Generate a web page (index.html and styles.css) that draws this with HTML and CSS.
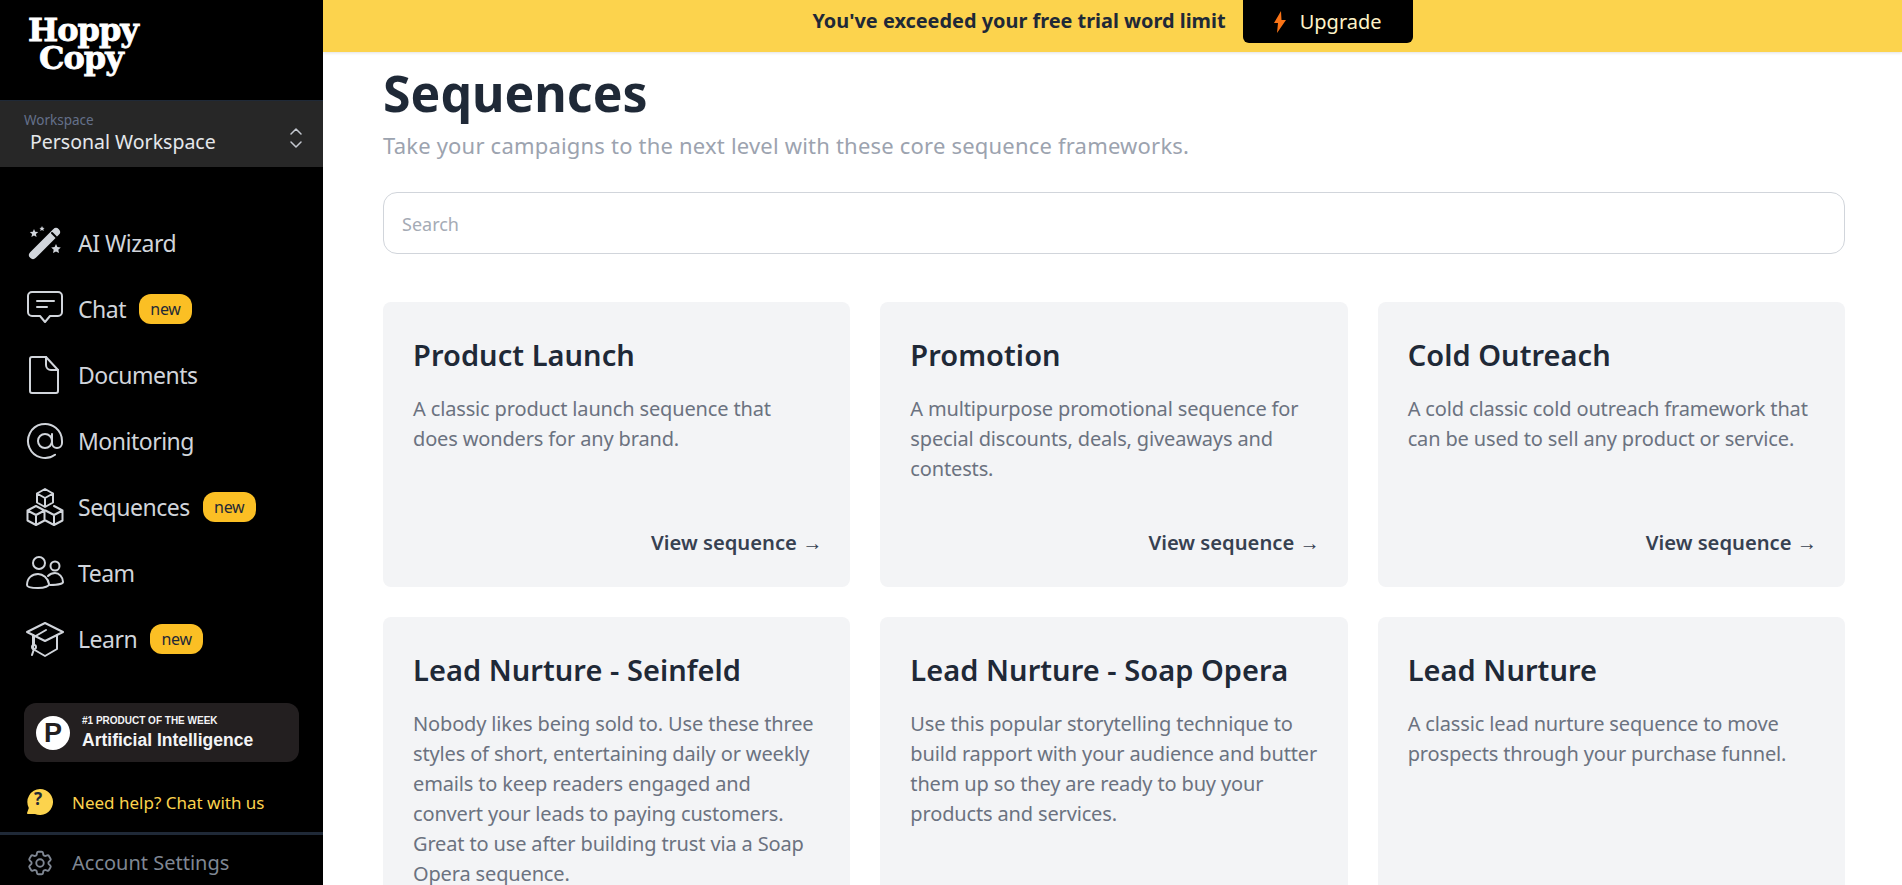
FILE: index.html
```html
<!DOCTYPE html>
<html lang="en">
<head>
  <meta charset="UTF-8" />
  <title>Hoppy Copy | Sequences</title>
  <link rel="stylesheet" href="styles.css">
</head>
<body>
  <aside class="sidebar">
    <div class="logo"><span>Hoppy</span><span>Copy</span></div>

    <div class="workspace">
      <div class="workspace-text">
        <div class="workspace-label">Workspace</div>
        <div class="workspace-name">Personal Workspace</div>
      </div>
      <svg class="chevrons" viewBox="0 0 12 20" width="12" height="20" fill="none" stroke="#c4c8d0" stroke-width="1.5" stroke-linecap="round" stroke-linejoin="round">
        <path d="M1 6l5-5 5 5"/><path d="M1 14l5 5 5-5"/>
      </svg>
    </div>

    <nav class="nav">
      <a class="nav-item">
        <svg class="nav-icon" viewBox="-1 -1 38 38" fill="#d1d5db">
          <path d="M6 30L29 7" fill="none" stroke="#d1d5db" stroke-width="8" stroke-linecap="round"/>
          <path d="M25 8l4 4" fill="none" stroke="#000" stroke-width="2" stroke-linecap="round"/>
          <path d="M7 4l1.200 2.800 3 .3-2.300 2 .7 3L7 10.500 4.400 12.100l.7-3-2.300-2 3-.3zM15 1l.8 1.700 1.800.2-1.300 1.200.4 1.800-1.700-.9-1.700.9.400-1.800-1.300-1.200 1.800-.2zM29 19l1.400 3.100 3.400.4-2.500 2.300.7 3.300-3-1.700-3 1.700.7-3.300-2.500-2.300 3.400-.4z"/>
        </svg>
        <span>AI Wizard</span>
      </a>
      <a class="nav-item">
        <svg class="nav-icon" viewBox="0 0 38 38" fill="none" stroke="#d1d5db" stroke-width="2" stroke-linecap="round" stroke-linejoin="round">
          <path d="M6 2h26a4 4 0 0 1 4 4v16a4 4 0 0 1-4 4h-8l-5 6-5-6H6a4 4 0 0 1-4-4V6a4 4 0 0 1 4-4z"/>
          <path d="M11 11h17M11 17h10"/>
        </svg>
        <span>Chat</span><span class="new-badge">new</span>
      </a>
      <a class="nav-item">
        <svg class="nav-icon" viewBox="0 0 38 38" fill="none" stroke="#d1d5db" stroke-width="2" stroke-linecap="round" stroke-linejoin="round">
          <path d="M6 1h14l12 13v21a2 2 0 0 1-2 2H6a2 2 0 0 1-2-2V3a2 2 0 0 1 2-2z"/>
          <path d="M20 1v8a5 5 0 0 0 5 5h7"/>
        </svg>
        <span>Documents</span>
      </a>
      <a class="nav-item">
        <svg class="nav-icon" viewBox="0 0 38 38" fill="none" stroke="#d1d5db" stroke-width="2" stroke-linecap="round" stroke-linejoin="round">
          <circle cx="19" cy="19" r="7"/>
          <path d="M26 12v9a5 5 0 0 0 10 0v-2a17 17 0 1 0-7 13.700"/>
        </svg>
        <span>Monitoring</span>
      </a>
      <a class="nav-item">
        <svg class="nav-icon" viewBox="0 0 38 38" fill="none" stroke="#d1d5db" stroke-width="2" stroke-linecap="round" stroke-linejoin="round">
          <path d="M19 1l8 4.500v9L19 19l-8-4.500v-9zM11 5.500l8 4.500 8-4.500M19 10v9"/>
          <path d="M10 18l8.500 4.500v10L10 37l-8.500-4.500v-10zM1.500 22.500L10 27l8.500-4.500M10 27v10"/>
          <path d="M28 18l8.500 4.500v10L28 37l-8.500-4.500M19.500 22.500L28 27l8.500-4.500M28 27v10"/>
        </svg>
        <span>Sequences</span><span class="new-badge">new</span>
      </a>
      <a class="nav-item">
        <svg class="nav-icon" viewBox="0 0 38 38" fill="none" stroke="#d1d5db" stroke-width="2" stroke-linecap="round" stroke-linejoin="round">
          <circle cx="13" cy="9" r="6"/>
          <circle cx="29" cy="12" r="4.500"/>
          <path d="M1 31c0-7 5-11 11-11 5 0 10 4 11 10 .3 2-4 4-11 4S1 33 1 31z"/>
          <path d="M22 22c2-2 4-3 7-3 4 0 8 4 8 9 0 1.500-4 3-13 3"/>
        </svg>
        <span>Team</span>
      </a>
      <a class="nav-item">
        <svg class="nav-icon" viewBox="0 0 38 38" fill="none" stroke="#d1d5db" stroke-width="2" stroke-linecap="round" stroke-linejoin="round">
          <path d="M19 3l18 9-18 9-18-9z"/>
          <path d="M7 15v14l12 7 12-7V15"/>
          <path d="M20 10L8 17v8"/>
          <circle cx="8" cy="27" r="2"/>
          <path d="M8 29l-2 6"/>
        </svg>
        <span>Learn</span><span class="new-badge">new</span>
      </a>
    </nav>

    <div class="ph-badge">
      <div class="ph-logo">P</div>
      <div class="ph-text">
        <div class="ph-small">#1 PRODUCT OF THE WEEK</div>
        <div class="ph-big">Artificial Intelligence</div>
      </div>
    </div>

    <a class="help">
      <svg class="help-icon" viewBox="0 0 26 26">
        <path d="M13 0a13 13 0 1 1-5 25H1a1 1 0 0 1-.8-1.500L1.800 19A13 13 0 0 1 13 0z" fill="#fcd34d"/>
      </svg>
      <span class="help-mark">?</span>
      <span>Need help? Chat with us</span>
    </a>

    <a class="settings">
      <svg class="settings-icon" viewBox="0 0 24 24" fill="none" stroke="#7f8793" stroke-width="1.500" stroke-linecap="round" stroke-linejoin="round">
        <path d="M9.594 3.940c.09-.542.56-.94 1.110-.94h2.593c.55 0 1.020.398 1.110.940l.213 1.281c.063.374.313.686.645.870.074.040.147.083.220.127.325.196.720.257 1.075.124l1.217-.456a1.125 1.125 0 0 1 1.370.490l1.296 2.247a1.125 1.125 0 0 1-.260 1.431l-1.003.827c-.293.241-.438.613-.430.992a7.723 7.723 0 0 1 0 .255c-.008.378.137.750.430.991l1.004.827c.424.350.534.955.260 1.430l-1.298 2.247a1.125 1.125 0 0 1-1.369.491l-1.217-.456c-.355-.133-.750-.072-1.076.124a6.470 6.470 0 0 1-.220.128c-.331.183-.581.495-.644.869l-.213 1.281c-.090.543-.560.940-1.110.940h-2.594c-.550 0-1.019-.398-1.110-.940l-.213-1.281c-.062-.374-.312-.686-.644-.870a6.520 6.520 0 0 1-.220-.127c-.325-.196-.720-.257-1.076-.124l-1.217.456a1.125 1.125 0 0 1-1.369-.490l-1.297-2.247a1.125 1.125 0 0 1 .260-1.431l1.004-.827c.292-.240.437-.613.430-.991a6.932 6.932 0 0 1 0-.255c.007-.380-.138-.751-.430-.992l-1.004-.827a1.125 1.125 0 0 1-.260-1.430l1.297-2.247a1.125 1.125 0 0 1 1.370-.491l1.216.456c.356.133.751.072 1.076-.124.072-.044.146-.086.220-.128.332-.183.582-.495.644-.869l.214-1.280z"/>
        <circle cx="12" cy="12" r="3"/>
      </svg>
      <span>Account Settings</span>
    </a>
  </aside>

  <div class="main">
    <div class="trial-bar">
      <span class="trial-text">You've exceeded your free trial word limit</span>
      <a class="upgrade">
        <svg viewBox="0 0 12 22" width="12" height="22"><path d="M7 0L0 12h4l-1 10 9-13H7.500z" fill="#f97316"/></svg>
        <span>Upgrade</span>
      </a>
    </div>

    <div class="content">
      <h1>Sequences</h1>
      <p class="subtitle">Take your campaigns to the next level with these core sequence frameworks.</p>
      <input class="search" type="text" placeholder="Search" />

      <div class="card-grid">
        <div class="card">
          <div class="card-title">Product Launch</div>
          <div class="card-desc">A classic product launch sequence that<br>does wonders for any brand.</div>
          <a class="card-link">View sequence <span class="arrow">→</span></a>
        </div>
        <div class="card">
          <div class="card-title">Promotion</div>
          <div class="card-desc">A multipurpose promotional sequence for special discounts, deals, giveaways and contests.</div>
          <a class="card-link">View sequence <span class="arrow">→</span></a>
        </div>
        <div class="card">
          <div class="card-title">Cold Outreach</div>
          <div class="card-desc">A cold classic cold outreach framework that can be used to sell any product or service.</div>
          <a class="card-link">View sequence <span class="arrow">→</span></a>
        </div>
        <div class="card">
          <div class="card-title">Lead Nurture - Seinfeld</div>
          <div class="card-desc">Nobody likes being sold to. Use these three styles of short, entertaining daily or weekly emails to keep readers engaged and convert your leads to paying customers. Great to use after building trust via a Soap Opera sequence.</div>
          <a class="card-link">View sequence <span class="arrow">→</span></a>
        </div>
        <div class="card">
          <div class="card-title">Lead Nurture - Soap Opera</div>
          <div class="card-desc">Use this popular storytelling technique to build rapport with your audience and butter them up so they are ready to buy your products and services.</div>
          <a class="card-link">View sequence <span class="arrow">→</span></a>
        </div>
        <div class="card">
          <div class="card-title">Lead Nurture</div>
          <div class="card-desc">A classic lead nurture sequence to move prospects through your purchase funnel.</div>
          <a class="card-link">View sequence <span class="arrow">→</span></a>
        </div>
      </div>
    </div>
  </div>
</body>
</html>
```

FILE: styles.css
```css
* {
  box-sizing: border-box;
}
html, body {
  height: 100%;
}
body {
  margin: 0;
  display: flex;
  overflow: hidden;
  font-family: "Noto Sans", sans-serif;
  color: #1f2937;
  background: white;
}

/* sidebar */
.sidebar {
  width: 323px;
  height: 885px;
  flex-shrink: 0;
  background: black;
  display: flex;
  flex-direction: column;
}
.logo {
  height: 100px;
  padding-top: 16px;
  display: flex;
  flex-direction: column;
  align-items: flex-start;
  font-family: "DejaVu Serif", serif;
  font-weight: bold;
  font-size: 32px;
  line-height: 28px;
  color: white;
  -webkit-text-stroke: 0.8px white;
}
.logo span:first-child {
  margin-left: 28px;
  letter-spacing: -1px;
}
.logo span:last-child {
  margin-left: 39px;
  letter-spacing: -1px;
}
.workspace {
  height: 67px;
  background: #272727;
  border-top: 1px solid #1f2937;
  padding: 0 21px 0 24px;
  display: flex;
  justify-content: space-between;
  align-items: center;
}
.workspace-text {
  margin-bottom: 3px;
}
.workspace-label {
  font-size: 13.5px;
  line-height: 17px;
  margin-bottom: 1px;
  color: #64708a;
}
.workspace-name {
  font-size: 19.5px;
  line-height: 24px;
  color: #e5e7eb;
  margin-left: 6px;
}
.chevrons {
  margin-top: 7px;
}
.nav {
  padding-top: 43px;
  display: flex;
  flex-direction: column;
}
.nav-item {
  height: 66px;
  padding-left: 26px;
  display: flex;
  align-items: center;
  font-size: 23px;
  color: #d1d5db;
  letter-spacing: -0.5px;
}
.nav-icon {
  width: 38px;
  height: 38px;
  margin-right: 14px;
  flex-shrink: 0;
}
.new-badge {
  margin-left: 13px;
  width: 53px;
  height: 30px;
  border-radius: 12px;
  background: #fbbf24;
  color: #1f2937;
  font-size: 16px;
  letter-spacing: -0.3px;
  display: flex;
  align-items: center;
  justify-content: center;
}
.ph-badge {
  margin: 31px 24px 0;
  height: 59px;
  border-radius: 12px;
  background: #231f20;
  display: flex;
  align-items: center;
  padding-left: 12px;
  font-family: "Liberation Sans", sans-serif;
  color: #f3f4f6;
}
.ph-logo {
  width: 34px;
  height: 34px;
  border-radius: 50%;
  background: white;
  color: #231f20;
  font-weight: bold;
  font-size: 27px;
  line-height: 34px;
  text-align: center;
  margin-right: 12px;
}
.ph-small {
  font-size: 10px;
  font-weight: bold;
  line-height: 13px;
}
.ph-big {
  font-size: 17.5px;
  font-weight: bold;
  line-height: 22px;
  margin-top: 2px;
}
.help {
  position: relative;
  height: 70px;
  padding: 10px 0 0 27px;
  display: flex;
  align-items: center;
  font-size: 17px;
  color: #fcd34d;
}
.help-icon {
  width: 26px;
  height: 26px;
  margin-right: 19px;
}
.help-mark {
  position: absolute;
  left: 34px;
  top: 25px;
  font-size: 17px;
  font-weight: bold;
  color: #1f2937;
}
.settings {
  flex: 1;
  border-top: 3px solid #1f2937;
  padding: 5px 0 0 25px;
  display: flex;
  align-items: center;
  font-size: 20px;
  color: #7f8793;
}
.settings-icon {
  width: 30px;
  height: 30px;
  margin-right: 17px;
}

/* main */
.main {
  flex: 1;
  min-width: 0;
  height: 885px;
  overflow: hidden;
}
.trial-bar {
  height: 52px;
  background: #fcd34d;
  box-shadow: 0 1px 3px rgba(0, 0, 0, 0.12);
  display: flex;
  justify-content: center;
  align-items: flex-start;
  gap: 17px;
}
.trial-text {
  font-size: 19.9px;
  font-weight: 700;
  line-height: 42px;
  color: #1f2937;
}
.upgrade {
  width: 170px;
  height: 43px;
  background: black;
  color: #fef3c7;
  border-radius: 0 0 6px 6px;
  display: flex;
  align-items: center;
  justify-content: center;
  gap: 14px;
  font-size: 20px;
}
.content {
  padding: 0 57px 0 60px;
}
h1 {
  margin: 11px 0 0;
  font-size: 50px;
  line-height: 60px;
  font-weight: 700;
  color: #1f2937;
}
.subtitle {
  margin: 8px 0 0;
  font-size: 22px;
  line-height: 28px;
  color: #9ca3af;
  letter-spacing: 0.2px;
}
.search {
  display: block;
  width: 100%;
  height: 62px;
  margin-top: 33px;
  padding: 2px 18px 0;
  border: 1px solid #d1d5db;
  border-radius: 14px;
  font-family: "Noto Sans", sans-serif;
  font-size: 18px;
  color: #1f2937;
  outline: none;
}
.search::placeholder {
  color: #a5abb5;
}
.card-grid {
  margin-top: 48px;
  display: grid;
  grid-template-columns: repeat(3, 1fr);
  gap: 30px;
}
.card {
  background: #f3f4f6;
  border-radius: 8px;
  padding: 35px 30px 30px;
  display: flex;
  flex-direction: column;
  min-height: 285px;
}
.card-title {
  font-size: 29px;
  font-weight: 600;
  line-height: 36px;
  color: #1f2937;
  letter-spacing: 0.05px;
}
.card-desc {
  margin: 21px -3px 0 0;
  font-size: 20px;
  line-height: 30px;
  color: #6b7280;
  letter-spacing: -0.15px;
  flex: 1;
}
.card-link {
  margin: 32px -2px 0 0;
  text-align: right;
  font-size: 20.2px;
  font-weight: 600;
  line-height: 30px;
  color: #374151;
}
.arrow {
  font-weight: 400;
}
```
